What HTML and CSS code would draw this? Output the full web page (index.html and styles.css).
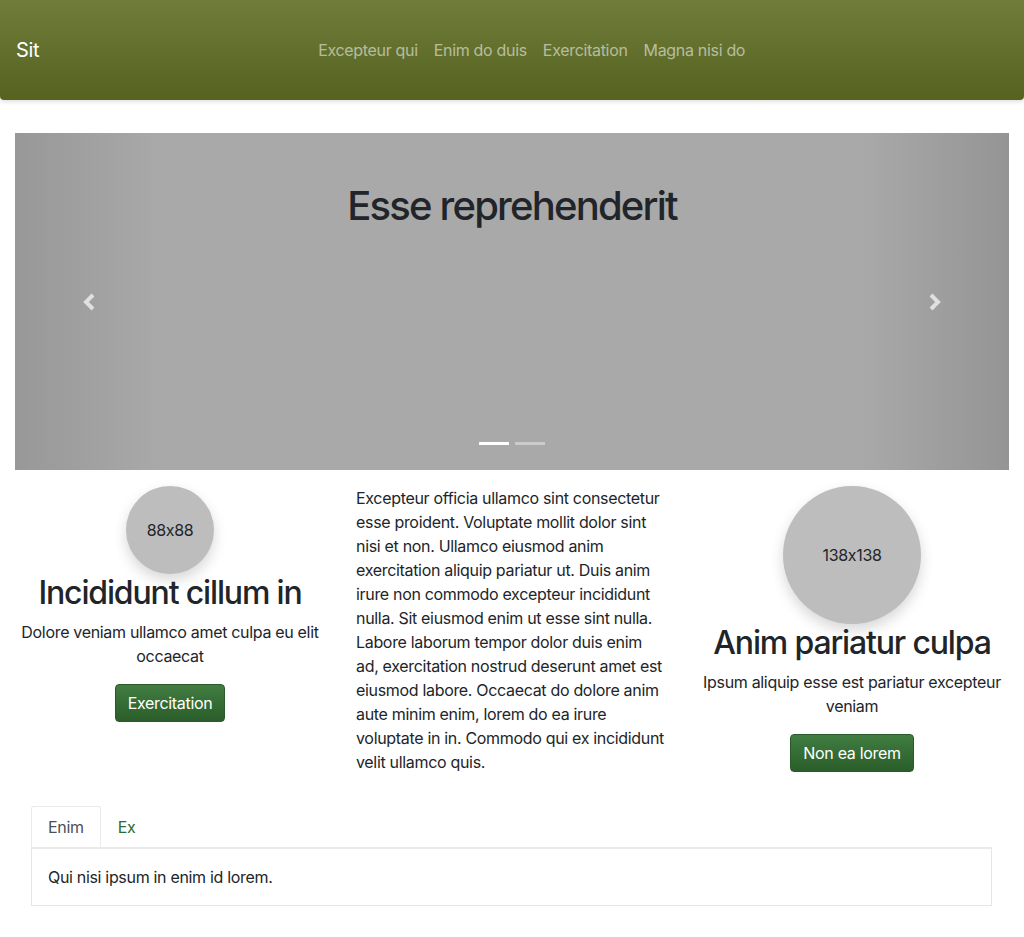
FILE: index.html
```html
<!DOCTYPE html>
<html lang="la">
<head>
<meta charset="utf-8">
<title>Sit</title>
<link rel="stylesheet" href="styles.css">
</head>
<body>
<nav class="navbar">
  <a class="brand" href="#">Sit</a>
  <ul class="nav-links">
    <li><a href="#">Excepteur qui</a></li>
    <li><a href="#">Enim do duis</a></li>
    <li><a href="#">Exercitation</a></li>
    <li><a href="#">Magna nisi do</a></li>
  </ul>
</nav>

<main class="container">
  <section class="carousel">
    <a class="control control-prev" href="#" aria-label="Previous">
      <svg width="16" height="18" viewBox="0 0 16 18"><path d="M11 2 L4 9 L11 16" fill="none" stroke="#e0e0e0" stroke-width="4" stroke-linejoin="miter"/></svg>
    </a>
    <h1 class="carousel-title">Esse reprehenderit</h1>
    <a class="control control-next" href="#" aria-label="Next">
      <svg width="16" height="18" viewBox="0 0 16 18"><path d="M5 2 L12 9 L5 16" fill="none" stroke="#e0e0e0" stroke-width="4" stroke-linejoin="miter"/></svg>
    </a>
    <ol class="indicators">
      <li class="active"></li>
      <li></li>
    </ol>
  </section>

  <section class="columns">
    <div class="col">
      <div class="circle small">88x88</div>
      <h2>Incididunt cillum in</h2>
      <p>Dolore veniam ullamco amet culpa eu elit occaecat</p>
      <a class="btn" href="#">Exercitation</a>
    </div>
    <div class="col col-text">
      <p>Excepteur officia ullamco sint consectetur esse proident. Voluptate mollit dolor sint nisi et non. Ullamco eiusmod anim exercitation aliquip pariatur ut. Duis anim irure non commodo excepteur incididunt nulla. Sit eiusmod enim ut esse sint nulla. Labore laborum tempor dolor duis enim ad, exercitation nostrud deserunt amet est eiusmod labore. Occaecat do dolore anim aute minim enim, lorem do ea irure voluptate in in. Commodo qui ex incididunt velit ullamco quis.</p>
    </div>
    <div class="col">
      <div class="circle large">138x138</div>
      <h2>Anim pariatur culpa</h2>
      <p>Ipsum aliquip esse est pariatur excepteur veniam</p>
      <a class="btn" href="#">Non ea lorem</a>
    </div>
  </section>

  <section class="tabs">
    <ul class="tab-list">
      <li class="tab active">Enim</li>
      <li class="tab">Ex</li>
    </ul>
    <div class="tab-content">Qui nisi ipsum in enim id lorem.</div>
  </section>
</main>
</body>
</html>
```

FILE: styles.css
```css
* { box-sizing: border-box; }

body {
  margin: 0;
  font-family: Inter, "Helvetica Neue", Arial, sans-serif;
  font-size: 16px;
  line-height: 24px;
  letter-spacing: -0.02em;
  font-feature-settings: "calt" 0;
  color: #212529;
  background: #fff;
}

a { text-decoration: none; }

.navbar {
  display: flex;
  align-items: center;
  height: 100px;
  padding: 0 16px;
  background: linear-gradient(to bottom, #6f7c3b, #56631f);
  border-radius: 0 0 4px 4px;
  box-shadow: 0 2px 4px rgba(0, 0, 0, 0.12);
}

.brand {
  color: #fff;
  font-size: 20px;
  line-height: 30px;
  margin-right: 16px;
}

.nav-links {
  display: flex;
  list-style: none;
  margin: 0 auto;
  padding: 0;
}

.nav-links a {
  display: block;
  padding: 8px;
  color: rgba(255, 255, 255, 0.55);
}

.container {
  padding: 33px 15px 0;
}

.carousel {
  position: relative;
  height: 337px;
  background: #a9a9a9;
  text-align: center;
  padding-top: 49px;
}

.carousel-title {
  margin: 0;
  font-size: 40px;
  line-height: 48px;
  font-weight: 500;
  letter-spacing: -0.045em;
  color: #212529;
}

.control {
  position: absolute;
  top: 0;
  bottom: 0;
  width: 15%;
  display: flex;
  align-items: center;
  justify-content: center;
}

.control-prev {
  left: 0;
  background: linear-gradient(to right, rgba(0, 0, 0, 0.1), rgba(0, 0, 0, 0));
}

.control-next {
  right: 0;
  background: linear-gradient(to left, rgba(0, 0, 0, 0.12), rgba(0, 0, 0, 0));
}

.indicators {
  position: absolute;
  left: 0;
  right: 0;
  bottom: 25px;
  display: flex;
  justify-content: center;
  gap: 6px;
  list-style: none;
  margin: 0;
  padding: 0;
}

.indicators li {
  width: 30px;
  height: 3px;
  background: rgba(255, 255, 255, 0.4);
}

.indicators li.active { background: #fff; }

.columns {
  display: grid;
  grid-template-columns: 310px 310px 310px;
  column-gap: 31px;
  margin-top: 16px;
}

.col {
  display: flex;
  flex-direction: column;
  align-items: center;
  text-align: center;
}

.col-text { text-align: left; align-items: stretch; }

.col p { margin: 0 0 16px; }
.col-text p { margin: 0; }

.circle {
  display: flex;
  align-items: center;
  justify-content: center;
  border-radius: 50%;
  background: #bdbdbd;
  box-shadow: 0 6px 14px rgba(0, 0, 0, 0.16);
  color: #212529;
}

.circle.small { width: 88px; height: 88px; }
.circle.large { width: 138px; height: 138px; }

.col h2 {
  margin: 0 0 8px;
  font-size: 32px;
  line-height: 38px;
  font-weight: 500;
  letter-spacing: -0.036em;
}

.btn {
  display: inline-block;
  padding: 6px 12px;
  border-radius: 4px;
  color: #fff;
  background: linear-gradient(to bottom, #417d41, #2a5d2a);
  border: 1px solid #2a5a2a;
}

.tabs {
  margin: 32px 16px 0 16px;
  width: 961px;
}

.tab-list {
  display: flex;
  list-style: none;
  margin: 0;
  padding: 0;
}

.tab {
  padding: 8px 16px 8px;
  border: 1px solid transparent;
  border-bottom: 0;
  border-radius: 3px 3px 0 0;
  color: #2e6a2e;
  line-height: 24px;
}

.tab.active {
  color: #495057;
  border-color: #e9e9ee;
  background: #fff;
}

.tab-content {
  border: 1px solid #e6e6ea;
  border-top: 2px solid #e9e9ee;
  padding: 16px;
  color: #212529;
}
```
